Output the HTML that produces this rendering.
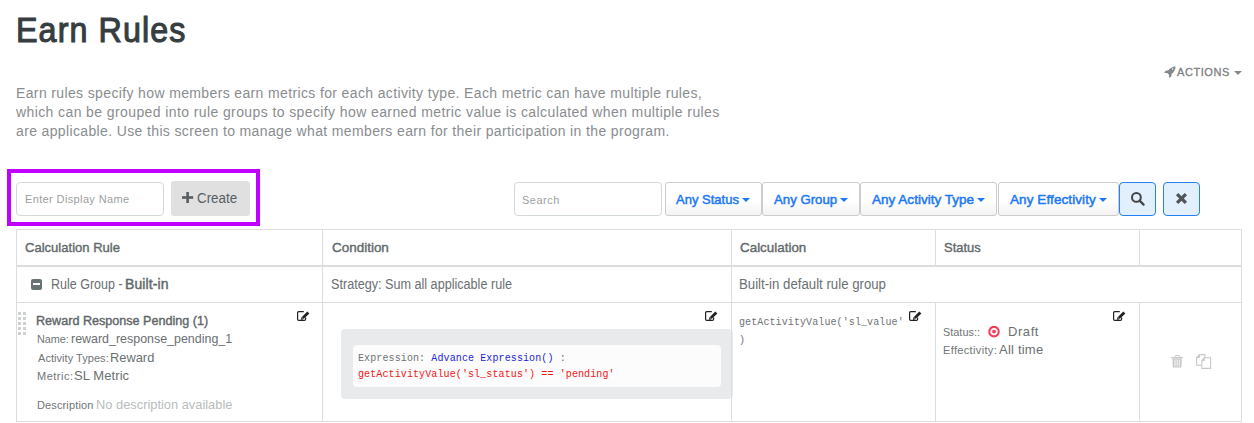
<!DOCTYPE html>
<html>
<head>
<meta charset="utf-8">
<title>Earn Rules</title>
<style>
html,body{margin:0;padding:0;background:#fff;}
body{width:1254px;height:423px;overflow:hidden;position:relative;font-family:"Liberation Sans",sans-serif;}
.a{position:absolute;}
.t{position:absolute;white-space:pre;line-height:1;transform-origin:0 0;font-family:"Liberation Sans",sans-serif;}
.t b{font-weight:normal;-webkit-text-stroke-width:0.45px;}
.hl{position:absolute;background:#dddddd;}
.inp{position:absolute;box-sizing:border-box;background:#fff;border:1px solid #d3d9db;border-radius:4px;}
.btn{position:absolute;box-sizing:border-box;border:1px solid #cccccc;border-radius:3px;background:linear-gradient(#ffffff 0%,#ffffff 55%,#f3f3f3 100%);}
.caret{position:absolute;width:0;height:0;border-left:4px solid transparent;border-right:4px solid transparent;border-top:4px solid #1c78f6;}
.bbtn{position:absolute;box-sizing:border-box;border:1px solid #2680f7;border-radius:4px;background:#e2effc;}
.mono{position:absolute;white-space:pre;font-family:"Liberation Mono",monospace;font-size:10px;}
</style>
</head>
<body>

<!-- actions dropdown -->
<svg class="a" style="left:1164px;top:66px" width="12" height="12" viewBox="0 0 12 12"><path fill-rule="evenodd" d="M11.6 0.4 C8.5 0.5 6 2 4.3 4.3 L1.6 4.7 L0.3 6.9 L3.2 7 L5 8.8 L5.1 11.7 L7.3 10.4 L7.7 7.7 C10 6 11.5 3.5 11.6 0.4 Z M8.6 2.3 A0.75 0.75 0 1 0 8.6 3.8 A0.75 0.75 0 1 0 8.6 2.3 Z" fill="#86898b"/></svg>
<div class="caret" style="left:1234px;top:71px;border-top-color:#86898b;"></div>

<!-- purple create group -->
<div class="a" style="left:7px;top:169px;width:245px;height:49px;border:4px solid #bf00ff;"></div>
<div class="inp" style="left:16px;top:182px;width:148px;height:34px;"></div>
<div class="a" style="left:171px;top:181px;width:79px;height:35px;background:#e0e0e0;border-radius:3px;"></div>
<svg class="a" style="left:182px;top:192px" width="12" height="11" viewBox="0 0 12 11"><rect x="0" y="4.2" width="11.2" height="2.6" fill="#555d63"/><rect x="4.3" y="0" width="2.6" height="11" fill="#555d63"/></svg>

<!-- filters -->
<div class="inp" style="left:514px;top:182px;width:148px;height:34px;"></div>
<div class="btn" style="left:665px;top:182px;width:97px;height:34px;"></div>
<div class="caret" style="left:742px;top:198px"></div>
<div class="btn" style="left:762px;top:182px;width:98px;height:34px;"></div>
<div class="caret" style="left:840px;top:198px"></div>
<div class="btn" style="left:860px;top:182px;width:137px;height:34px;"></div>
<div class="caret" style="left:977px;top:198px"></div>
<div class="btn" style="left:998px;top:182px;width:121px;height:34px;"></div>
<div class="caret" style="left:1099px;top:198px"></div>
<div class="bbtn" style="left:1119px;top:182px;width:37px;height:34px;"></div>
<svg class="a" style="left:1130px;top:191px" width="16" height="16" viewBox="0 0 16 16"><circle cx="6.4" cy="6.4" r="4.4" fill="none" stroke="#444" stroke-width="2"/><path d="M9.6 9.6 L13.6 13.6" stroke="#444" stroke-width="2.2" stroke-linecap="round"/></svg>
<div class="bbtn" style="left:1163px;top:182px;width:37px;height:34px;"></div>
<svg class="a" style="left:1175px;top:192px" width="13" height="13" viewBox="0 0 13 13"><path d="M2.1 2.1 L10.9 10.9 M10.9 2.1 L2.1 10.9" stroke="#505558" stroke-width="3.3"/></svg>

<!-- table borders -->
<div class="hl" style="left:16px;top:229px;width:1226px;height:1px;"></div>
<div class="hl" style="left:16px;top:265px;width:1226px;height:2px;"></div>
<div class="hl" style="left:16px;top:302px;width:1226px;height:1px;"></div>
<div class="hl" style="left:16px;top:421px;width:1226px;height:1px;"></div>
<div class="hl" style="left:16px;top:229px;width:1px;height:193px;"></div>
<div class="hl" style="left:1241px;top:229px;width:1px;height:193px;"></div>
<div class="hl" style="left:322px;top:229px;width:1px;height:193px;"></div>
<div class="hl" style="left:731px;top:229px;width:1px;height:193px;"></div>
<div class="hl" style="left:935px;top:229px;width:1px;height:37px;"></div>
<div class="hl" style="left:1139px;top:229px;width:1px;height:37px;"></div>
<div class="hl" style="left:935px;top:302px;width:1px;height:120px;"></div>
<div class="hl" style="left:1139px;top:302px;width:1px;height:120px;"></div>

<!-- group row icon -->
<div class="a" style="left:31px;top:279px;width:11px;height:11px;background:#6a7373;border-radius:2px;"><div style="position:absolute;left:2px;top:4px;width:7px;height:2px;background:#fff;"></div></div>

<!-- drag handle -->
<svg class="a" style="left:18px;top:312px" width="9" height="23" viewBox="0 0 9 23" fill="#cdd0d1">
<rect x="0" y="0" width="3" height="3"/><rect x="5" y="0" width="3" height="3"/>
<rect x="0" y="5" width="3" height="3"/><rect x="5" y="5" width="3" height="3"/>
<rect x="0" y="10" width="3" height="3"/><rect x="5" y="10" width="3" height="3"/>
<rect x="0" y="15" width="3" height="3"/><rect x="5" y="15" width="3" height="3"/>
<rect x="0" y="20" width="3" height="3"/><rect x="5" y="20" width="3" height="3"/>
</svg>

<!-- edit icons -->
<svg width="0" height="0" style="position:absolute"><defs>
<g id="ed"><path d="M6.8 0.6 H1.8 Q0.6 0.6 0.6 1.8 V8.2 Q0.6 9.4 1.8 9.4 H7.4 Q8.6 9.4 8.6 8.2 V6.6" fill="none" stroke="#222" stroke-width="1.2"/>
<path d="M10.3 0.4 L12.4 2.5 L6.3 8.3 L3.9 8.9 L4.4 6.5 Z" fill="#222"/><path d="M4.9 6.4 L6.5 8" stroke="#fff" stroke-width="0.6"/></g>
</defs></svg>
<svg class="a" style="left:297px;top:311px" width="13" height="11" viewBox="0 0 13 11"><use href="#ed"/></svg>
<svg class="a" style="left:705px;top:311px" width="13" height="11" viewBox="0 0 13 11"><use href="#ed"/></svg>
<svg class="a" style="left:909px;top:311px" width="13" height="11" viewBox="0 0 13 11"><use href="#ed"/></svg>
<svg class="a" style="left:1113px;top:311px" width="13" height="11" viewBox="0 0 13 11"><use href="#ed"/></svg>

<!-- condition box -->
<div class="a" style="left:341px;top:329px;width:392px;height:70px;background:#e8eaeb;border-radius:4px;"></div>
<div class="a" style="left:731px;top:329px;width:1px;height:70px;background:#dcdedf;"></div>
<div class="a" style="left:353px;top:345px;width:368px;height:42px;background:#fcfcfc;border-radius:4px;"></div>
<div class="mono" style="left:358px;top:351px;line-height:16px;letter-spacing:0.11px;color:#6d7275;">Expression: <span style="color:#2424d8;">Advance Expression()</span> :
<span style="color:#f41414;">getActivityValue('sl_status') == 'pending'</span></div>

<!-- calculation -->
<div class="mono" style="left:739px;top:314px;line-height:18px;letter-spacing:0.1px;color:#6d7275;">getActivityValue('sl_value'
)</div>

<!-- status icon -->
<svg class="a" style="left:988px;top:326px" width="12" height="12" viewBox="0 0 12 12"><circle cx="6" cy="5.6" r="4.75" fill="none" stroke="#f93d5a" stroke-width="2.1"/><circle cx="6" cy="5.6" r="1.9" fill="#f93d5a"/></svg>

<!-- action icons -->
<svg class="a" style="left:1171px;top:355px" width="13" height="14" viewBox="0 0 13 14"><path d="M4.2 2.3 V1.3 Q4.2 0.5 5 0.5 H7.8 Q8.6 0.5 8.6 1.3 V2.3" fill="none" stroke="#c8c8c8" stroke-width="1"/><rect x="0.2" y="2" width="11.8" height="1.3" fill="#c8c8c8"/><path d="M1.4 3.6 H10.8 L10.4 12.6 H1.8 Z M3.5 4.6 V11.4 H4.4 V4.6 Z M5.65 4.6 V11.4 H6.55 V4.6 Z M7.8 4.6 V11.4 H8.7 V4.6 Z" fill="#c8c8c8" fill-rule="evenodd"/></svg>
<svg class="a" style="left:1196px;top:354px" width="16" height="16" viewBox="0 0 16 16" fill="none" stroke="#c8c8c8" stroke-width="1.1"><path d="M3.6 0.6 H9 V3.6 M3.6 0.6 L0.6 3.6 V11.2 H5.5"/><path d="M3.6 0.6 V3.6 H0.6" fill="#c8c8c8" stroke-width="0.9"/><path d="M8.4 3.8 H14.6 V14.4 H5.8 V6.6 Z"/><path d="M8.4 3.8 V6.6 H5.8" fill="#c8c8c8" stroke-width="0.9"/></svg>

<div class="t" style="left:16.46px;top:12px;font-size:35px;-webkit-text-stroke:1.1px #363d40;letter-spacing:1.2px;transform:scaleX(0.9215);color:#363d40">Earn Rules</div>
<div class="t" style="left:16px;top:86px;font-size:14px;letter-spacing:0.365px;color:#8a8d8f">Earn rules specify how members earn metrics for each activity type. Each metric can have multiple rules,</div>
<div class="t" style="left:16px;top:105px;font-size:14px;letter-spacing:0.398px;color:#8a8d8f">which can be grouped into rule groups to specify how earned metric value is calculated when multiple rules</div>
<div class="t" style="left:16px;top:124px;font-size:14px;letter-spacing:0.362px;color:#8a8d8f">are applicable. Use this screen to manage what members earn for their participation in the program.</div>
<div class="t" style="left:1177px;top:67px;font-size:11px;-webkit-text-stroke-width:0.3px;letter-spacing:0.567px;color:#7d8082">ACTIONS</div>
<div class="t" style="left:25px;top:194px;font-size:11px;letter-spacing:0.371px;color:#9c9fa1">Enter Display Name</div>
<div class="t" style="left:197.45px;top:191px;font-size:14px;letter-spacing:0px;transform:scaleX(0.9537);color:#555d63">Create</div>
<div class="t" style="left:522px;top:195px;font-size:11px;letter-spacing:0.48px;color:#9c9fa1">Search</div>
<div class="t" style="left:676.4px;top:193px;font-size:13.5px;-webkit-text-stroke-width:0.5px;letter-spacing:0px;transform:scaleX(0.9631);color:#1c78f6">Any Status</div>
<div class="t" style="left:774.4px;top:193px;font-size:13.5px;-webkit-text-stroke-width:0.5px;letter-spacing:0px;transform:scaleX(0.9781);color:#1c78f6">Any Group</div>
<div class="t" style="left:872px;top:193px;font-size:13.5px;-webkit-text-stroke-width:0.5px;letter-spacing:0.019px;color:#1c78f6">Any Activity Type</div>
<div class="t" style="left:1010px;top:193px;font-size:13.5px;-webkit-text-stroke-width:0.5px;letter-spacing:0.086px;color:#1c78f6">Any Effectivity</div>
<div class="t" style="left:25.3px;top:241px;font-size:13.5px;-webkit-text-stroke-width:0.4px;letter-spacing:0px;transform:scaleX(0.9663);color:#62696b">Calculation Rule</div>
<div class="t" style="left:331.5px;top:241px;font-size:13.5px;-webkit-text-stroke-width:0.4px;letter-spacing:0px;transform:scaleX(0.9965);color:#62696b">Condition</div>
<div class="t" style="left:739.8px;top:241px;font-size:13.5px;-webkit-text-stroke-width:0.4px;letter-spacing:0px;transform:scaleX(0.9924);color:#62696b">Calculation</div>
<div class="t" style="left:944.0px;top:241px;font-size:13.5px;-webkit-text-stroke-width:0.4px;letter-spacing:0px;transform:scaleX(0.9579);color:#62696b">Status</div>
<div class="t" style="left:50.51px;top:277px;font-size:14px;letter-spacing:0px;transform:scaleX(0.8937);color:#6a7072">Rule Group -</div>
<div class="t" style="left:125px;top:277px;font-size:14px;-webkit-text-stroke-width:0.45px;letter-spacing:0.114px;color:#62696b">Built-in</div>
<div class="t" style="left:330.5px;top:277px;font-size:14px;letter-spacing:0px;transform:scaleX(0.9015);color:#6a7072">Strategy: Sum all applicable rule</div>
<div class="t" style="left:739.16px;top:277px;font-size:14px;letter-spacing:0px;transform:scaleX(0.9442);color:#6a7072">Built-in default rule group</div>
<div class="t" style="left:36.43px;top:314px;font-size:13px;-webkit-text-stroke-width:0.4px;letter-spacing:0px;transform:scaleX(0.9688);color:#5f6668">Reward Response Pending (1)</div>
<div class="t" style="left:36.62px;top:334px;font-size:11px;letter-spacing:0px;transform:scaleX(0.9839);color:#6f7577">Name:</div>
<div class="t" style="left:71.04px;top:332px;font-size:13px;letter-spacing:0px;transform:scaleX(0.9569);color:#6a7072">reward_response_pending_1</div>
<div class="t" style="left:38px;top:353px;font-size:11px;letter-spacing:0.043px;color:#6f7577">Activity Types:</div>
<div class="t" style="left:110.41px;top:351px;font-size:13px;letter-spacing:0px;transform:scaleX(0.9884);color:#6a7072">Reward</div>
<div class="t" style="left:37px;top:371px;font-size:11px;letter-spacing:0.5px;color:#6f7577">Metric:</div>
<div class="t" style="left:74px;top:369px;font-size:13px;letter-spacing:0.088px;color:#6a7072">SL Metric</div>
<div class="t" style="left:37px;top:400px;font-size:11px;letter-spacing:0.13px;color:#6f7577">Description</div>
<div class="t" style="left:96.21px;top:398px;font-size:13px;letter-spacing:0px;transform:scaleX(0.9883);color:#b8bcbd">No description available</div>
<div class="t" style="left:943.01px;top:327px;font-size:11px;letter-spacing:0px;transform:scaleX(0.9917);color:#6f7577">Status::</div>
<div class="t" style="left:1008px;top:325px;font-size:13px;letter-spacing:0.575px;color:#6a7072">Draft</div>
<div class="t" style="left:943px;top:345px;font-size:11px;letter-spacing:0.345px;color:#6f7577">Effectivity:</div>
<div class="t" style="left:999px;top:343px;font-size:13px;letter-spacing:0.214px;color:#6a7072">All time</div>
</body>
</html>
